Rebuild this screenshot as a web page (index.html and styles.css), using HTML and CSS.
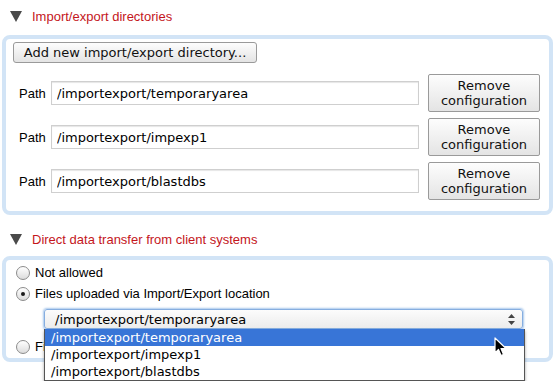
FILE: index.html
```html
<!DOCTYPE html>
<html>
<head>
    <meta charset="UTF-8">
    <title>Import/export settings</title>
    <link rel="stylesheet" href="styles.css">
</head>
<body>
    <div class="section-head">
        <svg class="toggle" width="12" height="11" viewBox="0 0 12 11"><polygon points="0,0 12,0 6,11" fill="#4a4a4a"/></svg>
        <span>Import/export directories</span>
    </div>
    <div class="panel dirs">
        <button class="btn add-btn">Add new import/export directory...</button>
        <div class="dir-row">
            <label>Path</label>
            <input class="path-input" type="text" value="/importexport/temporaryarea">
            <button class="btn remove-btn">Remove<br>configuration</button>
        </div>
        <div class="dir-row">
            <label>Path</label>
            <input class="path-input" type="text" value="/importexport/impexp1">
            <button class="btn remove-btn">Remove<br>configuration</button>
        </div>
        <div class="dir-row">
            <label>Path</label>
            <input class="path-input" type="text" value="/importexport/blastdbs">
            <button class="btn remove-btn">Remove<br>configuration</button>
        </div>
    </div>

    <div class="section-head second">
        <svg class="toggle" width="12" height="11" viewBox="0 0 12 11"><polygon points="0,0 12,0 6,11" fill="#4a4a4a"/></svg>
        <span>Direct data transfer from client systems</span>
    </div>
    <div class="panel transfer">
        <div class="radio-row"><span class="radio"></span>Not allowed</div>
        <div class="radio-row"><span class="radio checked"></span>Files uploaded via Import/Export location</div>
        <div class="select-wrap">
            <div class="select">
                <span>/importexport/temporaryarea</span>
                <svg class="arrows" width="7" height="11" viewBox="0 0 7 11"><polygon points="3.5,0 7,4 0,4" fill="#444"/><polygon points="0,7 7,7 3.5,11" fill="#444"/></svg>
            </div>
            <div class="dropdown">
                <div class="option active">/importexport/temporaryarea</div>
                <div class="option">/importexport/impexp1</div>
                <div class="option">/importexport/blastdbs</div>
            </div>
        </div>
        <!-- rest of this label sits under the open dropdown -->
        <div class="radio-row"><span class="radio"></span>Fi</div>
    </div>

    <svg class="cursor" width="14" height="20" viewBox="0 0 14 20"><path d="M1,1 L1,16 L4.5,12.5 L7,18.5 L9.5,17.5 L7,11.5 L12,11.5 Z" fill="#000" stroke="#fff" stroke-width="1.2" stroke-linejoin="round"/></svg>
</body>
</html>
```

FILE: styles.css
```css
body {
    margin: 0;
    background: #fff;
    font-family: "Liberation Sans", Arial, sans-serif;
    font-size: 13px;
    color: #000;
    position: relative;
    height: 381px;
    overflow: hidden;
}
.section-head {
    display: flex;
    align-items: center;
    height: 22px;
    padding: 5px 0 8px 10px;
    color: #c4161c;
}
.section-head.second { padding: 0 0 6px 10px; margin-top: 13px; }
.toggle { margin-right: 10px; }
.panel {
    margin: 0 6px 0 2px;
    border: 4px solid #d2e4f6;
    border-radius: 8px;
}
.dirs { padding: 3px 9px 11px 7px; }
.btn {
    font-family: "DejaVu Sans", sans-serif;
    font-size: 13px;
    color: #111;
    background: linear-gradient(#fdfdfd, #e4e4e4);
    border: 1px solid #9a9a9a;
    border-radius: 3px;
    padding: 0;
}
.add-btn { height: 21px; width: 244px; display: block; }
.dir-row {
    display: flex;
    align-items: center;
    margin-top: 6px;
    padding-left: 6px;
}
.add-btn + .dir-row { margin-top: 11px; }
.dir-row label { width: 32px; }
.path-input {
    width: 368px;
    height: 24px;
    box-sizing: border-box;
    border: 1px solid #cfcfcf;
    box-shadow: inset 0 1px 1px #e6e6e6;
    padding: 0 5px;
    font-family: "DejaVu Sans", sans-serif;
    font-size: 13px;
    color: #000;
}
.remove-btn {
    width: 112px;
    height: 38px;
    margin-left: 9px;
    line-height: 15px;
    border-radius: 2px;
}
.transfer { padding: 2px 0 1px 10px; height: 95px; }
.radio-row {
    display: flex;
    align-items: center;
    height: 21px;
}
.radio {
    width: 12px;
    height: 12px;
    border: 1px solid #8c8c8c;
    border-radius: 50%;
    background: linear-gradient(#ffffff, #dcdcdc);
    margin-right: 5px;
    position: relative;
}
.radio.checked::after {
    content: "";
    position: absolute;
    left: 4px;
    top: 4px;
    width: 4px;
    height: 4px;
    border-radius: 50%;
    background: #1a1a1a;
}
.select-wrap {
    position: relative;
    margin: 5px 0 7px 28px;
    width: 479px;
}
.select {
    display: flex;
    align-items: center;
    justify-content: space-between;
    height: 20px;
    box-sizing: border-box;
    border: 1px solid #86aee0;
    border-radius: 3px;
    box-shadow: 0 0 2px 1px #a9c8ec;
    background: linear-gradient(#fcfcfc, #ececec);
    padding: 0 7px 0 10px;
    font-family: "DejaVu Sans", sans-serif;
    font-size: 13px;
}
.dropdown {
    position: absolute;
    top: 20px;
    left: 0;
    width: 479px;
    background: #fff;
    border: 1px solid #555;
    border-top: none;
    box-shadow: 0 2px 3px rgba(0,0,0,0.35);
    font-family: "DejaVu Sans", sans-serif;
    font-size: 13px;
    z-index: 2;
}
.option { height: 17px; line-height: 17px; padding-left: 6px; }
.option.active { background: #3875d7; color: #fff; }
.cursor {
    position: absolute;
    left: 494px;
    top: 337px;
    z-index: 3;
}
```
